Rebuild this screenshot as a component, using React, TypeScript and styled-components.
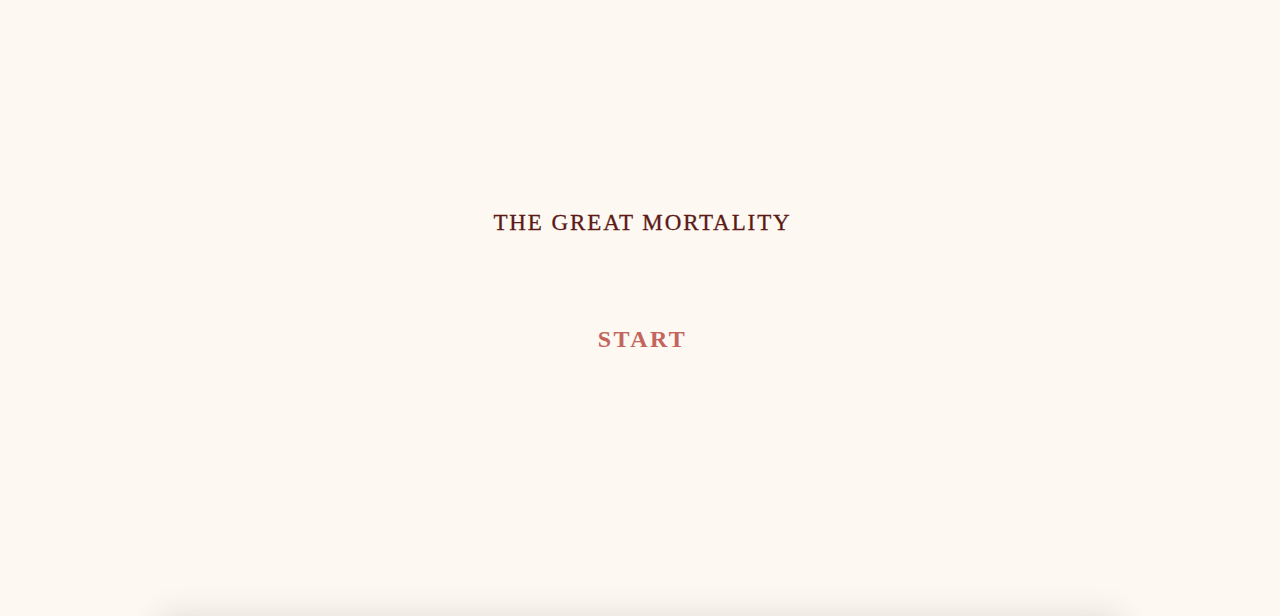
import React from "react";
import styled, { createGlobalStyle } from "styled-components";

const GlobalStyle = createGlobalStyle`
  html, body {
    margin: 0;
    padding: 0;
    background-color: #fdf8f2;
    font-family: "Liberation Serif", "DejaVu Serif", serif;
  }
`;

export default function App(): JSX.Element {
  return (
    <>
      <GlobalStyle />
      <Hero>
        <Title>The Great Mortality</Title>
        <StartButton type="button">Start</StartButton>
      </Hero>
      <Chapter />
    </>
  );
}

const Hero = styled.section`
  height: 616px;
  box-sizing: border-box;
  display: flex;
  flex-direction: column;
  align-items: center;
  padding-top: 208px;
`;

// letter-spacing trails the last glyph, so pad the left to keep it centred
const Title = styled.h1`
  margin: 0 0 0 3px;
  padding-left: 2px;
  font-size: 23px;
  font-weight: 400;
  line-height: 30px;
  letter-spacing: 1.9px;
  text-transform: uppercase;
  color: #5b1a15;
  -webkit-text-stroke: 0.3px #5b1a15;
`;

const StartButton = styled.button`
  margin-top: 86px;
  padding: 0 0 0 5px;
  border: 0;
  background: none;
  cursor: pointer;
  font-family: inherit;
  font-size: 24px;
  font-weight: 700;
  line-height: 30px;
  letter-spacing: 0.1em;
  text-transform: uppercase;
  color: #c2655d;
`;

const Chapter = styled.div`
  width: 960px;
  height: 400px;
  margin: 0 auto;
  background-color: #fdf8f2;
  box-shadow: 0 0 30px rgba(50, 50, 40, 0.14);
`;
